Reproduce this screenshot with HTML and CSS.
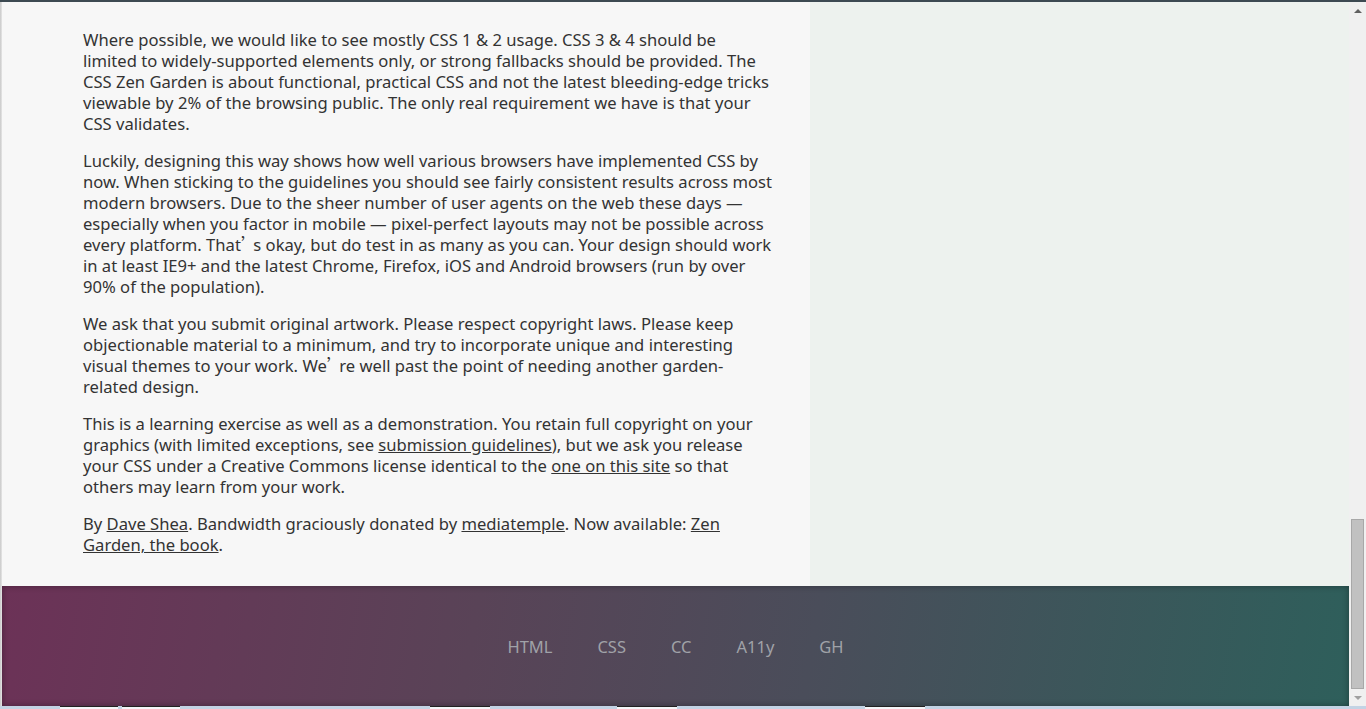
FILE: index.html
```html
<!DOCTYPE html>
<html lang="en">
<head>
<meta charset="utf-8">
<title>CSS Zen Garden</title>
<link rel="stylesheet" href="styles.css">
</head>
<body>
<div class="window">
  <div class="frame-top"></div>
  <div class="window-body">
    <div class="frame-left"></div>
    <div class="viewport">
      <div class="content">
        <main class="main">
          <p>Where possible, we would like to see mostly CSS 1 &amp; 2 usage. CSS 3 &amp; 4 should be limited to widely-supported elements only, or strong fallbacks should be provided. The CSS Zen Garden is about functional, practical CSS and not the latest bleeding-edge tricks viewable by 2% of the browsing public. The only real requirement we have is that your CSS validates.</p>
          <p>Luckily, designing this way shows how well various browsers have implemented CSS by now. When sticking to the guidelines you should see fairly consistent results across most modern browsers. Due to the sheer number of user agents on the web these days — especially when you factor in mobile — pixel-perfect layouts may not be possible across every platform. <span class="nw">That<span class="fw">’</span>s</span> okay, but do test in as many as you can. Your design should work in at least IE9+ and the latest Chrome, Firefox, iOS and Android browsers (run by over 90% of the population).</p>
          <p>We ask that you submit original artwork. Please respect copyright laws. Please keep objectionable material to a minimum, and try to incorporate unique and interesting visual themes to your work. <span class="nw">We<span class="fw">’</span>re</span> well past the point of needing another garden-related design.</p>
          <p>This is a learning exercise as well as a demonstration. You retain full copyright on your graphics (with limited exceptions, see <a href="#">submission guidelines</a>), but we ask you release your CSS under a Creative Commons license identical to the <a href="#">one on this site</a> so that others may learn from your work.</p>
          <p>By <a href="#">Dave Shea</a>. Bandwidth graciously donated by <a href="#">mediatemple</a>. Now available: <a href="#">Zen Garden, the book</a>.</p>
        </main>
        <aside class="side"></aside>
      </div>
      <footer class="footer">
        <a href="#">HTML</a>
        <a href="#">CSS</a>
        <a href="#">CC</a>
        <a href="#">A11y</a>
        <a href="#">GH</a>
      </footer>
    </div>
    <div class="scrollbar">
      <div class="arrow up"></div>
      <div class="track"><div class="thumb"></div></div>
      <div class="arrow down"></div>
    </div>
  </div>
  <div class="taskbar">
    <span class="tab t1"></span><span class="tab t2"></span><span class="tab t3"></span><span class="tab t4"></span><span class="tab t5"></span>
  </div>
</div>
</body>
</html>
```

FILE: styles.css
```css
html, body {
  margin: 0;
  padding: 0;
  height: 100%;
  overflow: hidden;
}
body {
  font-family: "Noto Sans", "Open Sans", sans-serif;
  color: #333;
  background: #edf2ee;
}
.window {
  display: flex;
  flex-direction: column;
  height: 709px;
}
.frame-top {
  height: 2px;
  background: #3d4a52;
  flex: none;
}
.window-body {
  display: flex;
  flex: 1;
  min-height: 0;
}
.frame-left {
  width: 2px;
  flex: none;
  background: linear-gradient(to right, #c8c8c8, #e6e6e6);
}
.viewport {
  flex: 1;
  display: flex;
  flex-direction: column;
  min-width: 0;
}
.content {
  display: flex;
  height: 584px;
  flex: none;
}
.main {
  width: 808px;
  box-sizing: border-box;
  background: #f7f7f7;
  padding: 27px 37px 0 81px;
  font-size: 16.6px;
  line-height: 21px;
}
.main p {
  margin: 0 0 16px;
}
.main a {
  color: #333;
  text-decoration: underline;
}
.nw {
  white-space: nowrap;
}
.fw {
  font-family: "Noto Sans CJK SC", sans-serif;
  display: inline-block;
  width: 0.75em;
}
.side {
  flex: 1;
  background: #edf2ee;
}
.footer {
  flex: 1;
  display: flex;
  justify-content: center;
  align-items: center;
  gap: 45px;
  background: linear-gradient(100deg, #6c3257 0%, #594357 35%, #4a4d5a 60%, #2e5f5b 100%);
  box-shadow: inset 0 0 6px rgba(0,0,0,0.35);
}
.footer a {
  color: #a0a2a8;
  text-decoration: none;
  font-size: 16.5px;
}
.scrollbar {
  width: 17px;
  flex: none;
  background: #f0f0f0;
  display: flex;
  flex-direction: column;
}
.arrow {
  height: 17px;
  flex: none;
  display: flex;
  align-items: center;
  justify-content: center;
}
.arrow::before {
  content: "";
  width: 0;
  height: 0;
  border-left: 4px solid transparent;
  border-right: 4px solid transparent;
}
.arrow.up::before {
  border-bottom: 4px solid #606060;
}
.arrow.down::before {
  border-top: 4px solid #a0a0a0;
}
.track {
  flex: 1;
  display: flex;
  flex-direction: column;
  justify-content: flex-end;
  padding: 0 2px;
}
.thumb {
  height: 168px;
  background: #c1c1c1;
  border: 1px solid #a8a8a8;
}
.taskbar {
  height: 3px;
  flex: none;
  background: #c3d3e4;
  position: relative;
}
.tab {
  position: absolute;
  top: 0;
  height: 3px;
  background: #f4f6f8;
  border-top: 1px solid #222;
  box-sizing: border-box;
}
.t1 { left: 60px; width: 58px; }
.t2 { left: 122px; width: 58px; }
.t3 { left: 430px; width: 60px; }
.t4 { left: 617px; width: 60px; }
.t5 { left: 865px; width: 60px; }
```
